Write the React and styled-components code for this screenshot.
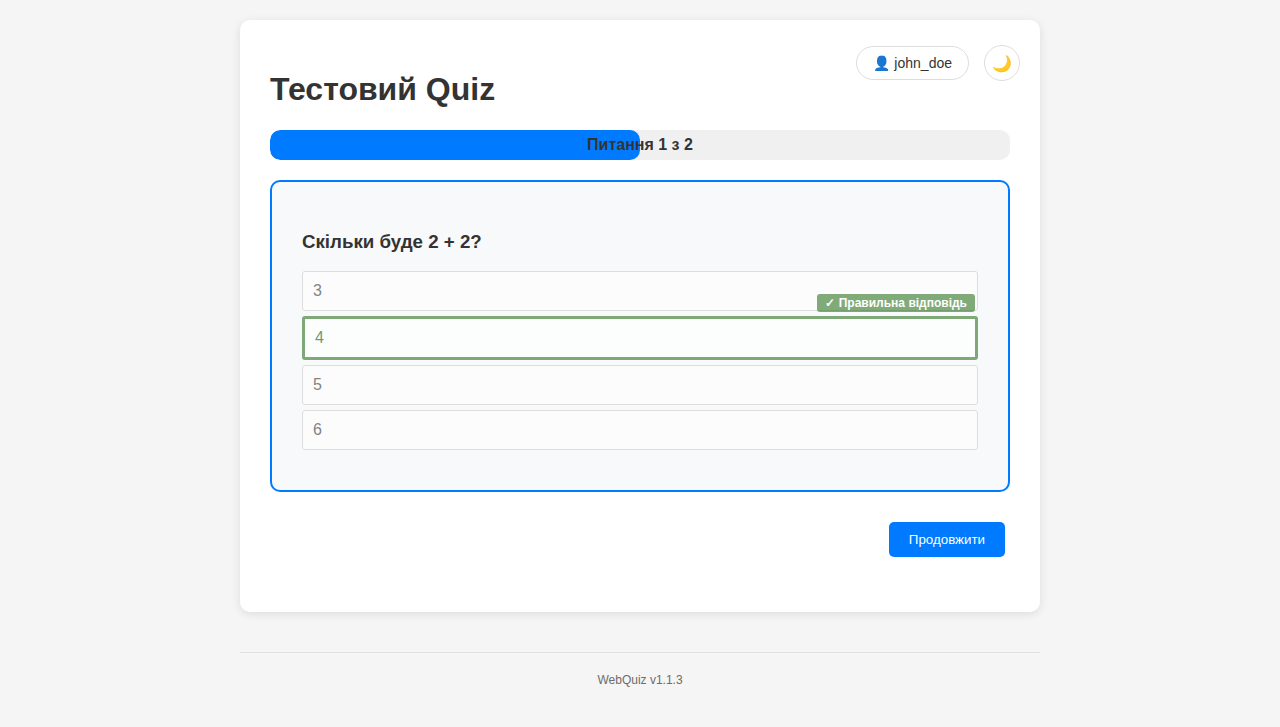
import React from "react";
import styled, { createGlobalStyle } from "styled-components";

const GlobalStyle = createGlobalStyle`
  body {
    margin: 0;
    padding: 20px;
    background: #f5f5f5;
    color: #333;
    font-family: Arial, "Liberation Sans", sans-serif;
  }
`;

const Page = styled.div`
  max-width: 800px;
  margin: 0 auto;
`;

const Card = styled.main`
  position: relative;
  box-sizing: border-box;
  height: 592px;
  padding: 30px;
  background: #fff;
  border-radius: 10px;
  box-shadow: 0 2px 10px rgba(0, 0, 0, 0.1);
`;

const UserTools = styled.div`
  position: absolute;
  top: 25px;
  right: 20px;
  display: flex;
  align-items: center;
  gap: 15px;
`;

const UserBadge = styled.div`
  box-sizing: border-box;
  height: 34px;
  padding: 8px 16px;
  border: 1px solid #ddd;
  border-radius: 20px;
  background: #fff;
  font-size: 14px;
  line-height: 16px;
  white-space: nowrap;
`;

const ThemeToggle = styled.button`
  box-sizing: border-box;
  width: 36px;
  height: 36px;
  padding: 0;
  border: 1px solid #ddd;
  border-radius: 50%;
  background: #fff;
  font-family: inherit;
  font-size: 16px;
`;

const Title = styled.h1`
  margin: 21px 0 22px;
  font-size: 32px;
  line-height: 37px;
`;

const Progress = styled.div`
  position: relative;
  height: 30px;
  margin-bottom: 20px;
  overflow: hidden;
  border-radius: 10px;
  background: #f0f0f0;
`;

const ProgressFill = styled.div`
  width: ${(p) => p.$value}%;
  height: 100%;
  border-radius: 10px;
  background: #007bff;
`;

const ProgressLabel = styled.div`
  position: absolute;
  inset: 0;
  font-weight: bold;
  line-height: 30px;
  text-align: center;
`;

const Question = styled.section`
  box-sizing: border-box;
  height: 312px;
  padding: 30px;
  border: 2px solid #007bff;
  border-radius: 10px;
  background: #f8f9fa;
`;

const QuestionText = styled.h3`
  margin: 19px 0 18px;
  font-size: 18.72px;
  line-height: 22px;
`;

const Options = styled.div`
  display: flex;
  flex-direction: column;
  gap: 5px;
`;

const Option = styled.div`
  position: relative;
  padding: 10px;
  border: ${(p) => (p.$correct ? "3px solid #2d7420" : "1px solid #ccc")};
  border-radius: 3px;
  background: #fff;
  color: ${(p) => (p.$correct ? "#155724" : "#333")};
  line-height: 18px;
  opacity: 0.6;
`;

const CorrectTag = styled.span`
  position: absolute;
  top: -25px;
  right: 0;
  padding: 2px 8px;
  border-radius: 3px;
  background: #2d7420;
  color: #fff;
  font-size: 12px;
  font-weight: bold;
  line-height: 14px;
`;

const Actions = styled.div`
  display: flex;
  justify-content: flex-end;
  padding: 30px 5px 0;
`;

const PrimaryButton = styled.button`
  height: 35px;
  padding: 10px 20px;
  border: 0;
  border-radius: 5px;
  background: #007bff;
  color: #fff;
  font-family: inherit;
  font-size: 13.333px;
  line-height: 15px;
`;

const Footer = styled.footer`
  margin-top: 40px;
  padding: 20px 0;
  border-top: 1px solid #e0e0e0;
  color: #6c6c6c;
  font-size: 12px;
  line-height: 14px;
  text-align: center;
`;

const answers = [
  { text: "3" },
  { text: "4", correct: true },
  { text: "5" },
  { text: "6" },
];

export default function App() {
  return (
    <Page>
      <GlobalStyle />
      <Card>
        <UserTools>
          <UserBadge>👤 john_doe</UserBadge>
          <ThemeToggle>🌙</ThemeToggle>
        </UserTools>
        <Title>Тестовий Quiz</Title>
        <Progress>
          <ProgressFill $value={50} />
          <ProgressLabel>Питання 1 з 2</ProgressLabel>
        </Progress>
        <Question>
          <QuestionText>Скільки буде 2 + 2?</QuestionText>
          <Options>
            {answers.map((a) => (
              <Option key={a.text} $correct={a.correct}>
                {a.text}
                {a.correct && <CorrectTag>✓ Правильна відповідь</CorrectTag>}
              </Option>
            ))}
          </Options>
        </Question>
        <Actions>
          <PrimaryButton>Продовжити</PrimaryButton>
        </Actions>
      </Card>
      <Footer>WebQuiz v1.1.3</Footer>
    </Page>
  );
}
